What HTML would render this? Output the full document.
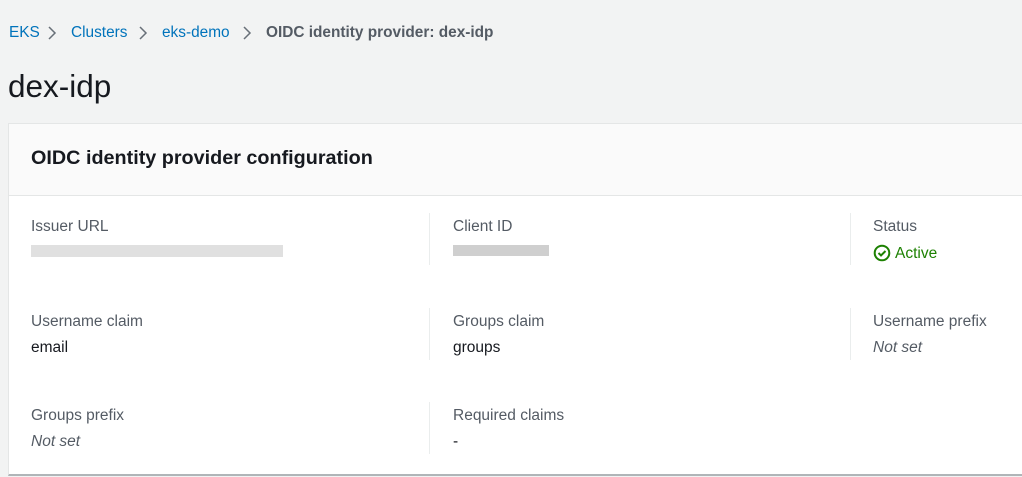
<!DOCTYPE html>
<html><head><style>
body{margin:0;width:1022px;height:477px;background:#f2f3f3;font-family:"Liberation Sans",sans-serif;position:relative;overflow:hidden;color:#16191f}
.a{position:absolute;white-space:nowrap}
.bc{top:24px;font-size:15.4px;color:#0073bb}
.chev{position:absolute;top:25px}
.lbl{font-size:15.5px;color:#545b64}
.val{font-size:15.5px;color:#16191f}
.it{font-style:italic;color:#545b64}
.div{position:absolute;width:1px;background:#eaeded}
</style></head><body>
<div class="a bc" style="left:9px">EKS</div>
<svg class="chev" style="left:47px" width="10" height="16"><path d="M2 2l6 6-6 6" fill="none" stroke="#687078" stroke-width="1.5"/></svg>
<div class="a bc" style="left:71px">Clusters</div>
<svg class="chev" style="left:138px" width="10" height="16"><path d="M2 2l6 6-6 6" fill="none" stroke="#687078" stroke-width="1.5"/></svg>
<div class="a bc" style="left:162px">eks-demo</div>
<svg class="chev" style="left:242px" width="10" height="16"><path d="M2 2l6 6-6 6" fill="none" stroke="#687078" stroke-width="1.5"/></svg>
<div class="a bc" style="left:266px;color:#545b64;font-weight:bold">OIDC identity provider: dex-idp</div>
<div class="a" style="left:8px;top:68px;font-size:31.5px">dex-idp</div>
<div class="a" style="left:8px;top:123px;width:1020px;height:350px;background:#fff;border:1px solid #e4e6e6;border-bottom:2px solid #b0b5b8"></div>
<div class="a" style="left:9px;top:124px;width:1020px;height:71px;background:#fafafa;border-bottom:1px solid #e4e6e6"></div>
<div class="a" style="left:31px;top:147px;font-size:19.8px;font-weight:bold">OIDC identity provider configuration</div>
<div class="div" style="left:429px;top:213px;height:52px"></div>
<div class="div" style="left:850px;top:213px;height:52px"></div>
<div class="div" style="left:429px;top:308px;height:52px"></div>
<div class="div" style="left:850px;top:308px;height:52px"></div>
<div class="div" style="left:429px;top:402px;height:52px"></div>
<div class="a lbl" style="left:31px;top:218px">Issuer URL</div>
<div class="a" style="left:31px;top:245px;width:252px;height:12px;background:#d8d8d8;opacity:.8"></div>
<div class="a lbl" style="left:453px;top:218px">Client ID</div>
<div class="a" style="left:453px;top:245px;width:96px;height:11px;background:#cfcfcf"></div>
<div class="a lbl" style="left:873px;top:218px">Status</div>
<svg class="a" style="left:873px;top:244px" width="18" height="18"><circle cx="9" cy="9" r="7.3" fill="none" stroke="#1d8102" stroke-width="2"/><path d="M5.5 9l2.5 2.5 4.5-4.5" fill="none" stroke="#1d8102" stroke-width="2"/></svg>
<div class="a val" style="left:895px;top:245px;color:#1d8102">Active</div>
<div class="a lbl" style="left:31px;top:313px">Username claim</div>
<div class="a val" style="left:31px;top:339px">email</div>
<div class="a lbl" style="left:453px;top:313px">Groups claim</div>
<div class="a val" style="left:453px;top:339px">groups</div>
<div class="a lbl" style="left:873px;top:313px">Username prefix</div>
<div class="a val it" style="left:873px;top:339px">Not set</div>
<div class="a lbl" style="left:31px;top:407px">Groups prefix</div>
<div class="a val it" style="left:31px;top:433px">Not set</div>
<div class="a lbl" style="left:453px;top:407px">Required claims</div>
<div class="a val" style="left:453px;top:433px">-</div>
</body></html>
